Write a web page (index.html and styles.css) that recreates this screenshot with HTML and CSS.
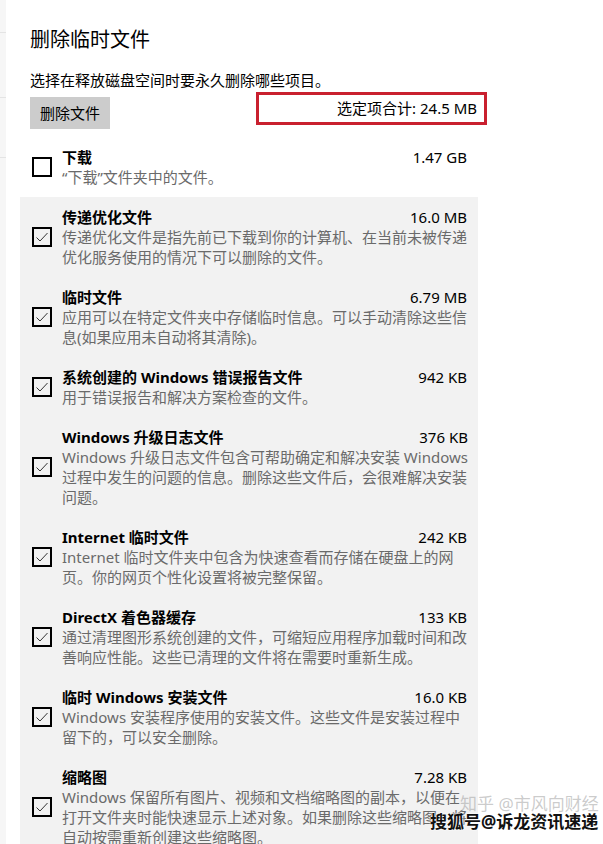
FILE: index.html
```html
<!DOCTYPE html>
<html lang="zh-CN">
<head>
  <meta charset="UTF-8">
  <meta name="viewport" content="width=device-width, initial-scale=1.0">
  <title>删除临时文件</title>
  <link rel="stylesheet" href="styles.css">
</head>
<body>
  <div class="page">
    <div class="side">
      <div class="side-line l1"></div>
      <div class="side-line l2"></div>
      <div class="side-line l3"></div>
    </div>
    <div class="main">
      <h1>删除临时文件</h1>
      <p class="intro">选择在释放磁盘空间时要永久删除哪些项目。</p>
      <div class="toolbar">
        <button class="btn">删除文件</button>
        <span class="total">选定项合计: 24.5 MB</span>
        <div class="mark"></div>
      </div>

      <div class="list">
        <div class="item">
          <span class="box"></span>
          <div class="text">
            <div class="head"><b>下载</b><span>1.47 GB</span></div>
            <div class="desc">“下载”文件夹中的文件。</div>
          </div>
        </div>

        <div class="panel">
          <div class="item">
            <span class="box checked"><svg viewBox="0 0 16 16"><polyline points="2.5,8.5 6,12 13.5,4"/></svg></span>
            <div class="text">
              <div class="head"><b>传递优化文件</b><span>16.0 MB</span></div>
              <div class="desc">传递优化文件是指先前已下载到你的计算机、在当前未被传递<br>优化服务使用的情况下可以删除的文件。</div>
            </div>
          </div>
          <div class="item">
            <span class="box checked"><svg viewBox="0 0 16 16"><polyline points="2.5,8.5 6,12 13.5,4"/></svg></span>
            <div class="text">
              <div class="head"><b>临时文件</b><span>6.79 MB</span></div>
              <div class="desc">应用可以在特定文件夹中存储临时信息。可以手动清除这些信<br>息(如果应用未自动将其清除)。</div>
            </div>
          </div>
          <div class="item">
            <span class="box checked"><svg viewBox="0 0 16 16"><polyline points="2.5,8.5 6,12 13.5,4"/></svg></span>
            <div class="text">
              <div class="head"><b>系统创建的 Windows 错误报告文件</b><span>942 KB</span></div>
              <div class="desc">用于错误报告和解决方案检查的文件。</div>
            </div>
          </div>
          <div class="item">
            <span class="box checked"><svg viewBox="0 0 16 16"><polyline points="2.5,8.5 6,12 13.5,4"/></svg></span>
            <div class="text">
              <div class="head"><b>Windows 升级日志文件</b><span>376 KB</span></div>
              <div class="desc">Windows 升级日志文件包含可帮助确定和解决安装 Windows<br>过程中发生的问题的信息。删除这些文件后，会很难解决安装<br>问题。</div>
            </div>
          </div>
          <div class="item">
            <span class="box checked"><svg viewBox="0 0 16 16"><polyline points="2.5,8.5 6,12 13.5,4"/></svg></span>
            <div class="text">
              <div class="head"><b>Internet 临时文件</b><span>242 KB</span></div>
              <div class="desc">Internet 临时文件夹中包含为快速查看而存储在硬盘上的网<br>页。你的网页个性化设置将被完整保留。</div>
            </div>
          </div>
          <div class="item">
            <span class="box checked"><svg viewBox="0 0 16 16"><polyline points="2.5,8.5 6,12 13.5,4"/></svg></span>
            <div class="text">
              <div class="head"><b>DirectX 着色器缓存</b><span>133 KB</span></div>
              <div class="desc">通过清理图形系统创建的文件，可缩短应用程序加载时间和改<br>善响应性能。这些已清理的文件将在需要时重新生成。</div>
            </div>
          </div>
          <div class="item">
            <span class="box checked"><svg viewBox="0 0 16 16"><polyline points="2.5,8.5 6,12 13.5,4"/></svg></span>
            <div class="text">
              <div class="head"><b>临时 Windows 安装文件</b><span>16.0 KB</span></div>
              <div class="desc">Windows 安装程序使用的安装文件。这些文件是安装过程中<br>留下的，可以安全删除。</div>
            </div>
          </div>
          <div class="item">
            <span class="box checked"><svg viewBox="0 0 16 16"><polyline points="2.5,8.5 6,12 13.5,4"/></svg></span>
            <div class="text">
              <div class="head"><b>缩略图</b><span>7.28 KB</span></div>
              <div class="desc">Windows 保留所有图片、视频和文档缩略图的副本，以便在<br>打开文件夹时能快速显示上述对象。如果删除这些缩略图，将<br>自动按需重新创建这些缩略图。</div>
            </div>
          </div>
        </div>
      </div>
    </div>
  </div>

  <div class="watermark">
    <span class="wm-faint">知乎 @市风向财经</span>
    <span class="wm-bold">搜狐号@诉龙资讯速递</span>
  </div>
</body>
</html>
```

FILE: styles.css
```css
body {
  margin: 0;
  background: #fff;
  color: #000;
  font-family: "Noto Sans", "Noto Sans CJK SC", sans-serif;
  font-size: 15px;
  overflow: hidden;
}
.page {
  display: flex;
  height: 844px;
}
.side {
  position: relative;
  width: 6px;
  background: #f6f6f6;
  flex-shrink: 0;
}
.side-line {
  position: absolute;
  left: 0;
  width: 6px;
  height: 1px;
  background: #e4e4e4;
}
.l1 { top: 32px; }
.l2 { top: 97px; }
.l3 { top: 157px; }
.main {
  flex: 1;
  padding-left: 24px;
}
h1 {
  margin: 25px 0 0;
  font-size: 20px;
  font-weight: normal;
  line-height: 30px;
}
.intro {
  margin: 15px 0 0;
  line-height: 20px;
}
.toolbar {
  position: relative;
  display: flex;
  justify-content: space-between;
  align-items: flex-start;
  width: 447px;
  margin-top: 7px;
}
.btn {
  height: 32px;
  padding: 0 10px;
  border: none;
  background: #cccccc;
  color: #000;
  font-family: inherit;
  font-size: 15px;
  line-height: 32px;
}
.total {
  margin-top: 1px;
  line-height: 20px;
}
.mark {
  position: absolute;
  left: 226px;
  top: -5px;
  width: 225px;
  height: 27px;
  border: 3px solid #c9202f;
}
.list {
  margin: 8px 0 0 -10px;
  width: 458px;
}
.panel {
  background: #f2f2f2;
}
.item {
  display: flex;
  align-items: center;
  padding: 10px 11px 10px 12px;
  gap: 10px;
}
.box {
  width: 16px;
  height: 16px;
  border: 2px solid #000;
  flex-shrink: 0;
  display: flex;
}
.box svg {
  width: 16px;
  height: 16px;
  fill: none;
  stroke: #333;
  stroke-width: 1;
}
.text {
  flex: 1;
  line-height: 20px;
}
.head {
  display: flex;
  justify-content: space-between;
}
.head b {
  font-weight: bold;
}
.desc {
  color: #6a6a6a;
  white-space: nowrap;
}
.watermark {
  position: absolute;
  right: 8px;
  bottom: 10px;
  width: 165px;
  height: 40px;
}
.wm-faint {
  position: absolute;
  left: 30px;
  top: -4px;
  color: rgba(160, 160, 160, 0.55);
  font-size: 17px;
  white-space: nowrap;
}
.wm-bold {
  position: absolute;
  left: 0;
  top: 14px;
  font-size: 17px;
  font-weight: bold;
  color: #111;
  white-space: nowrap;
  text-shadow: 0 0 2px #fff, 0 0 2px #fff;
}
```
